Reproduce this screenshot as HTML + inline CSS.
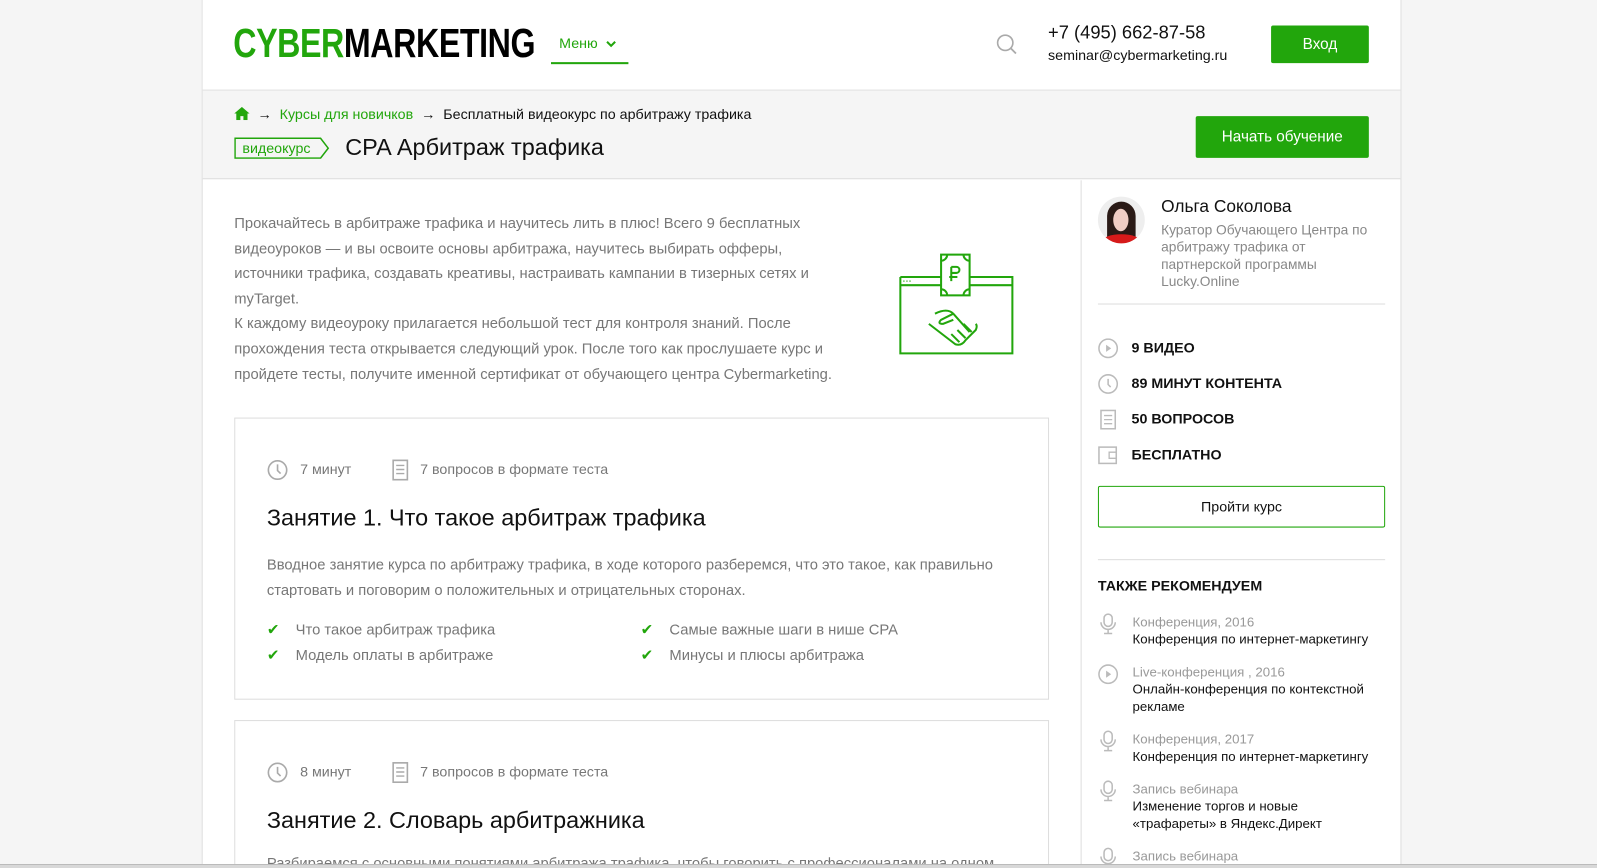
<!DOCTYPE html>
<html><head><meta charset="utf-8"><style>
*{box-sizing:border-box;margin:0;padding:0}
html,body{width:1597px;height:868px;overflow:hidden}
body{background:#f5f5f5;font-family:"Liberation Sans",Arial,sans-serif;color:#111;position:relative}
.scale{position:absolute;left:0;top:0;width:1568px;height:852px;overflow:hidden;transform:scale(1.01849);transform-origin:0 0}
.wrap{position:absolute;left:198px;top:0;width:1178px;height:852px;background:#fff;border-left:1px solid #ddd;border-right:1px solid #ddd}
.abs{position:absolute}
.hdr{left:0;top:0;width:100%;height:89px;border-bottom:1px solid #ddd;background:#fff}
.crumb{left:0;top:89px;width:100%;height:87px;background:#f5f5f5;border-bottom:1px solid #ddd}
.btn{background:#22a60c;color:#fff;text-align:center;font-size:15px;border-radius:2px}
.card{border:1px solid #ddd;background:#fff}
.meta{font-size:14px;color:#777}
.side{left:862px;top:177px;width:1px;height:691px;background:#ddd}
.ico{display:inline-block;vertical-align:middle}
.feat{font-size:14px;font-weight:bold;color:#111}
.rec{font-size:13px;line-height:17px}
</style></head><body>
<div class="scale">
<div class="wrap">
 <div class="abs hdr">
  <div class="abs" style="left:30px;top:21px;font-size:40px;letter-spacing:-0.5px;transform:scaleX(0.79);transform-origin:left;white-space:nowrap;font-weight:bold"><span style="color:#22a60c">CYBER</span><span style="color:#000">MARKETING</span></div>
  <div class="abs" style="left:342px;top:34px;width:76px;height:29px;border-bottom:2px solid #22a60c;color:#22a60c;font-size:14px;padding-left:8px">Меню <svg width="10" height="8" viewBox="0 0 10 8" style="margin-left:4px"><path d="M1 2l4 4 4-4" stroke="#22a60c" stroke-width="2" fill="none"/></svg></div>
  <svg class="abs" style="left:779px;top:33px" width="22" height="22" viewBox="0 0 22 22"><circle cx="9" cy="9" r="7.5" stroke="#aaa" stroke-width="1.6" fill="none"/><path d="M14.5 14.5l5 5" stroke="#aaa" stroke-width="1.8"/></svg>
  <div class="abs" style="left:830px;top:22px;font-size:18px;color:#111">+7 (495) 662-87-58</div>
  <div class="abs" style="left:830px;top:46px;font-size:14px;color:#111">seminar@cybermarketing.ru</div>
  <div class="abs btn" style="left:1049px;top:25px;width:96px;height:37px;line-height:37px">Вход</div>
 </div>
 <div class="abs crumb">
  <div class="abs" style="left:31px;top:15px;font-size:14px;white-space:nowrap"><svg width="15" height="13" viewBox="0 0 15 13" style="vertical-align:-1px"><path d="M7.5 0L0 6.5h2V13h4V9h3v4h4V6.5h2z" fill="#22a60c"/></svg> &nbsp;→ &nbsp;<span style="color:#22a60c">Курсы для новичков</span> &nbsp;→ &nbsp;Бесплатный видеокурс по арбитражу трафика</div>
  <svg class="abs" style="left:31px;top:46px" width="94" height="21" viewBox="0 0 94 21"><path d="M0.75 0.75h84l7.5 9.75-7.5 9.75h-84z" stroke="#22a60c" stroke-width="1.5" fill="none"/><text x="8" y="15" font-size="14" fill="#22a60c" font-family="Liberation Sans">видеокурс</text></svg>
  <div class="abs" style="left:140px;top:42px;font-size:23px;color:#111">CPA Арбитраж трафика</div>
  <div class="abs btn" style="left:975px;top:25px;width:170px;height:41px;line-height:41px">Начать обучение</div>
 </div>
 <div class="abs" style="left:31px;top:208px;width:600px;font-size:14.5px;line-height:24.6px;color:#777">Прокачайтесь в арбитраже трафика и научитесь лить в плюс! Всего 9 бесплатных видеоуроков — и вы освоите основы арбитража, научитесь выбирать офферы, источники трафика, создавать креативы, настраивать кампании в тизерных сетях и myTarget.<br>К каждому видеоуроку прилагается небольшой тест для контроля знаний. После прохождения теста открывается следующий урок. После того как прослушаете курс и пройдете тесты, получите именной сертификат от обучающего центра Cybermarketing.</div>
 <svg class="abs" style="left:683px;top:248px" width="114" height="102" viewBox="0 0 114 102"><g stroke="#22a60c" stroke-width="2" fill="none"><path d="M2 24h40M70 24h42v75H2V24M2 32h40M70 32h42"/><rect x="42" y="2" width="28" height="40"/><path d="M52 14v14M52 14h5a3 3 0 010 6h-5M50 24h8"/><path d="M42 8a6 6 0 006-6M64 2a6 6 0 006 6M42 36a6 6 0 016 6M70 36a6 6 0 00-6 6"/><path d="M36 60q12-6 18 0l16 18M30 70l26 20q6 2 10-4l10-10q2-4 0-6M54 60l-12 6q-4 4 2 4l10-4M60 88l-8-8M66 84l-8-8M72 78l-8-8"/></g><path d="M5 28h1M8 28h1M11 28h1" stroke="#22a60c" stroke-width="1.5"/></svg>
 <div class="abs card" style="left:31px;top:410px;width:800px;height:277px">
  <div class="abs meta" style="left:31px;top:40px;white-space:nowrap"><svg class="ico" width="21" height="21" viewBox="0 0 21 21"><circle cx="10.5" cy="10.5" r="9" stroke="#aaa" stroke-width="1.6" fill="none"/><path d="M10.5 5v6l3 3" stroke="#aaa" stroke-width="1.6" fill="none"/></svg> &nbsp; 7 минут <span style="display:inline-block;width:36px"></span><svg class="ico" width="16" height="21" viewBox="0 0 16 21"><rect x="1" y="1" width="14" height="19" stroke="#aaa" stroke-width="1.6" fill="none"/><path d="M4 6h8M4 10h8M4 14h8" stroke="#aaa" stroke-width="1.4"/></svg> &nbsp; 7 вопросов в формате теста</div>
  <div class="abs" style="left:31px;top:84px;font-size:23px;color:#111">Занятие 1. Что такое арбитраж трафика</div>
  <div class="abs" style="left:31px;top:132px;width:740px;font-size:14.5px;line-height:25px;color:#777">Вводное занятие курса по арбитражу трафика, в ходе которого разберемся, что это такое, как правильно стартовать и поговорим о положительных и отрицательных сторонах.</div>
  <div class="abs" style="left:31px;top:196px;font-size:14.5px;line-height:25px;color:#777"><span style="color:#22a60c">✔</span> &nbsp;&nbsp;&nbsp;Что такое арбитраж трафика<br><span style="color:#22a60c">✔</span> &nbsp;&nbsp;&nbsp;Модель оплаты в арбитраже</div>
  <div class="abs" style="left:398px;top:196px;font-size:14.5px;line-height:25px;color:#777"><span style="color:#22a60c">✔</span> &nbsp;&nbsp;&nbsp;Самые важные шаги в нише CPA<br><span style="color:#22a60c">✔</span> &nbsp;&nbsp;&nbsp;Минусы и плюсы арбитража</div>
 </div>
 <div class="abs card" style="left:31px;top:707px;width:800px;height:200px">
  <div class="abs meta" style="left:31px;top:40px;white-space:nowrap"><svg class="ico" width="21" height="21" viewBox="0 0 21 21"><circle cx="10.5" cy="10.5" r="9" stroke="#aaa" stroke-width="1.6" fill="none"/><path d="M10.5 5v6l3 3" stroke="#aaa" stroke-width="1.6" fill="none"/></svg> &nbsp; 8 минут <span style="display:inline-block;width:36px"></span><svg class="ico" width="16" height="21" viewBox="0 0 16 21"><rect x="1" y="1" width="14" height="19" stroke="#aaa" stroke-width="1.6" fill="none"/><path d="M4 6h8M4 10h8M4 14h8" stroke="#aaa" stroke-width="1.4"/></svg> &nbsp; 7 вопросов в формате теста</div>
  <div class="abs" style="left:31px;top:84px;font-size:23px;color:#111">Занятие 2. Словарь арбитражника</div>
  <div class="abs" style="left:31px;top:132px;width:760px;font-size:14.5px;color:#777;white-space:nowrap">Разбираемся с основными понятиями арбитража трафика, чтобы говорить с профессионалами на одном</div>
 </div>
 <div class="abs side"></div>
 <div class="abs" style="left:879px;top:193px;width:46px;height:46px;border-radius:50%;background:#eee;overflow:hidden">
  <div class="abs" style="left:9px;top:5px;width:28px;height:38px;border-radius:14px 14px 4px 4px;background:#2a1a16"></div>
  <div class="abs" style="left:15px;top:12px;width:15px;height:22px;border-radius:50%;background:#f0cdc4"></div>
  <div class="abs" style="left:4px;top:37px;width:38px;height:14px;border-radius:50% 50% 0 0;background:#d61a1a"></div>
 </div>
 <div class="abs" style="left:941px;top:193px;font-size:17px;color:#111">Ольга Соколова</div>
 <div class="abs" style="left:941px;top:217px;width:215px;font-size:13.5px;line-height:17px;color:#888">Куратор Обучающего Центра по арбитражу трафика от партнерской программы Lucky.Online</div>
 <div class="abs" style="left:879px;top:298px;width:282px;height:1px;background:#ddd"></div>
 <div class="abs" style="left:879px;top:332px">
  <div style="height:35px"><svg class="ico" width="20" height="20" viewBox="0 0 20 20"><circle cx="10" cy="10" r="9" stroke="#bbb" stroke-width="1.5" fill="none"/><path d="M8 6.5v7l5-3.5z" fill="#bbb"/></svg><span class="feat" style="margin-left:13px">9 ВИДЕО</span></div>
  <div style="height:35px"><svg class="ico" width="20" height="20" viewBox="0 0 20 20"><circle cx="10" cy="10" r="9" stroke="#bbb" stroke-width="1.5" fill="none"/><path d="M10 5v5.5l2.5 2.5" stroke="#bbb" stroke-width="1.5" fill="none"/></svg><span class="feat" style="margin-left:13px">89 МИНУТ КОНТЕНТА</span></div>
  <div style="height:35px"><svg class="ico" width="20" height="20" viewBox="0 0 20 20"><rect x="3" y="1" width="14" height="18" stroke="#bbb" stroke-width="1.5" fill="none"/><path d="M6 6h8M6 10h8M6 14h8" stroke="#bbb" stroke-width="1.3"/></svg><span class="feat" style="margin-left:13px">50 ВОПРОСОВ</span></div>
  <div style="height:35px"><svg class="ico" width="20" height="20" viewBox="0 0 20 20"><rect x="1" y="2" width="17" height="16" stroke="#bbb" stroke-width="1.5" fill="none"/><path d="M11 7h7v6h-7z" stroke="#bbb" stroke-width="1.3" fill="none"/></svg><span class="feat" style="margin-left:13px">БЕСПЛАТНО</span></div>
 </div>
 <div class="abs" style="left:879px;top:477px;width:282px;height:41px;border:1px solid #22a60c;border-radius:2px;text-align:center;line-height:39px;font-size:14px;color:#111">Пройти курс</div>
 <div class="abs" style="left:879px;top:549px;width:282px;height:1px;background:#ddd"></div>
 <div class="abs" style="left:879px;top:567px;font-size:14px;font-weight:bold;color:#111">ТАКЖЕ РЕКОМЕНДУЕМ</div>
 <div class="abs rec" style="left:879px;top:602px;width:290px">
  <div style="position:absolute;top:0"><svg width="20" height="22" viewBox="0 0 20 22"><g stroke="#bbb" stroke-width="1.5" fill="none"><rect x="6" y="1" width="8" height="12" rx="4"/><path d="M3 9a7 7 0 0014 0M10 16v4M6 20h8"/></g></svg></div>
  <div style="margin-left:34px;width:250px"><span style="color:#999">Конференция, 2016</span><br>Конференция по интернет-маркетингу</div>
  <div style="position:absolute;top:50px"><svg width="20" height="20" viewBox="0 0 20 20"><circle cx="10" cy="10" r="9" stroke="#bbb" stroke-width="1.5" fill="none"/><path d="M8 6.5v7l5-3.5z" fill="#bbb"/></svg></div>
  <div style="margin-left:34px;margin-top:15px;width:250px"><span style="color:#999">Live-конференция , 2016</span><br>Онлайн-конференция по контекстной рекламе</div>
  <div style="position:absolute;top:115px"><svg width="20" height="22" viewBox="0 0 20 22"><g stroke="#bbb" stroke-width="1.5" fill="none"><rect x="6" y="1" width="8" height="12" rx="4"/><path d="M3 9a7 7 0 0014 0M10 16v4M6 20h8"/></g></svg></div>
  <div style="margin-left:34px;margin-top:15px;width:250px"><span style="color:#999">Конференция, 2017</span><br>Конференция по интернет-маркетингу</div>
  <div style="position:absolute;top:164px"><svg width="20" height="22" viewBox="0 0 20 22"><g stroke="#bbb" stroke-width="1.5" fill="none"><rect x="6" y="1" width="8" height="12" rx="4"/><path d="M3 9a7 7 0 0014 0M10 16v4M6 20h8"/></g></svg></div>
  <div style="margin-left:34px;margin-top:15px;width:200px"><span style="color:#999">Запись вебинара</span><br>Изменение торгов и новые «трафареты» в Яндекс.Директ</div>
  <div style="position:absolute;top:230px"><svg width="20" height="22" viewBox="0 0 20 22"><g stroke="#bbb" stroke-width="1.5" fill="none"><rect x="6" y="1" width="8" height="12" rx="4"/><path d="M3 9a7 7 0 0014 0M10 16v4M6 20h8"/></g></svg></div>
  <div style="margin-left:34px;margin-top:15px"><span style="color:#999">Запись вебинара</span></div>
 </div>
</div>
</div>
<div class="abs" style="left:0;top:864px;width:1597px;height:4px;background:#d8d8d8;border-top:1px solid #bbb;z-index:5"></div>
</body></html>
